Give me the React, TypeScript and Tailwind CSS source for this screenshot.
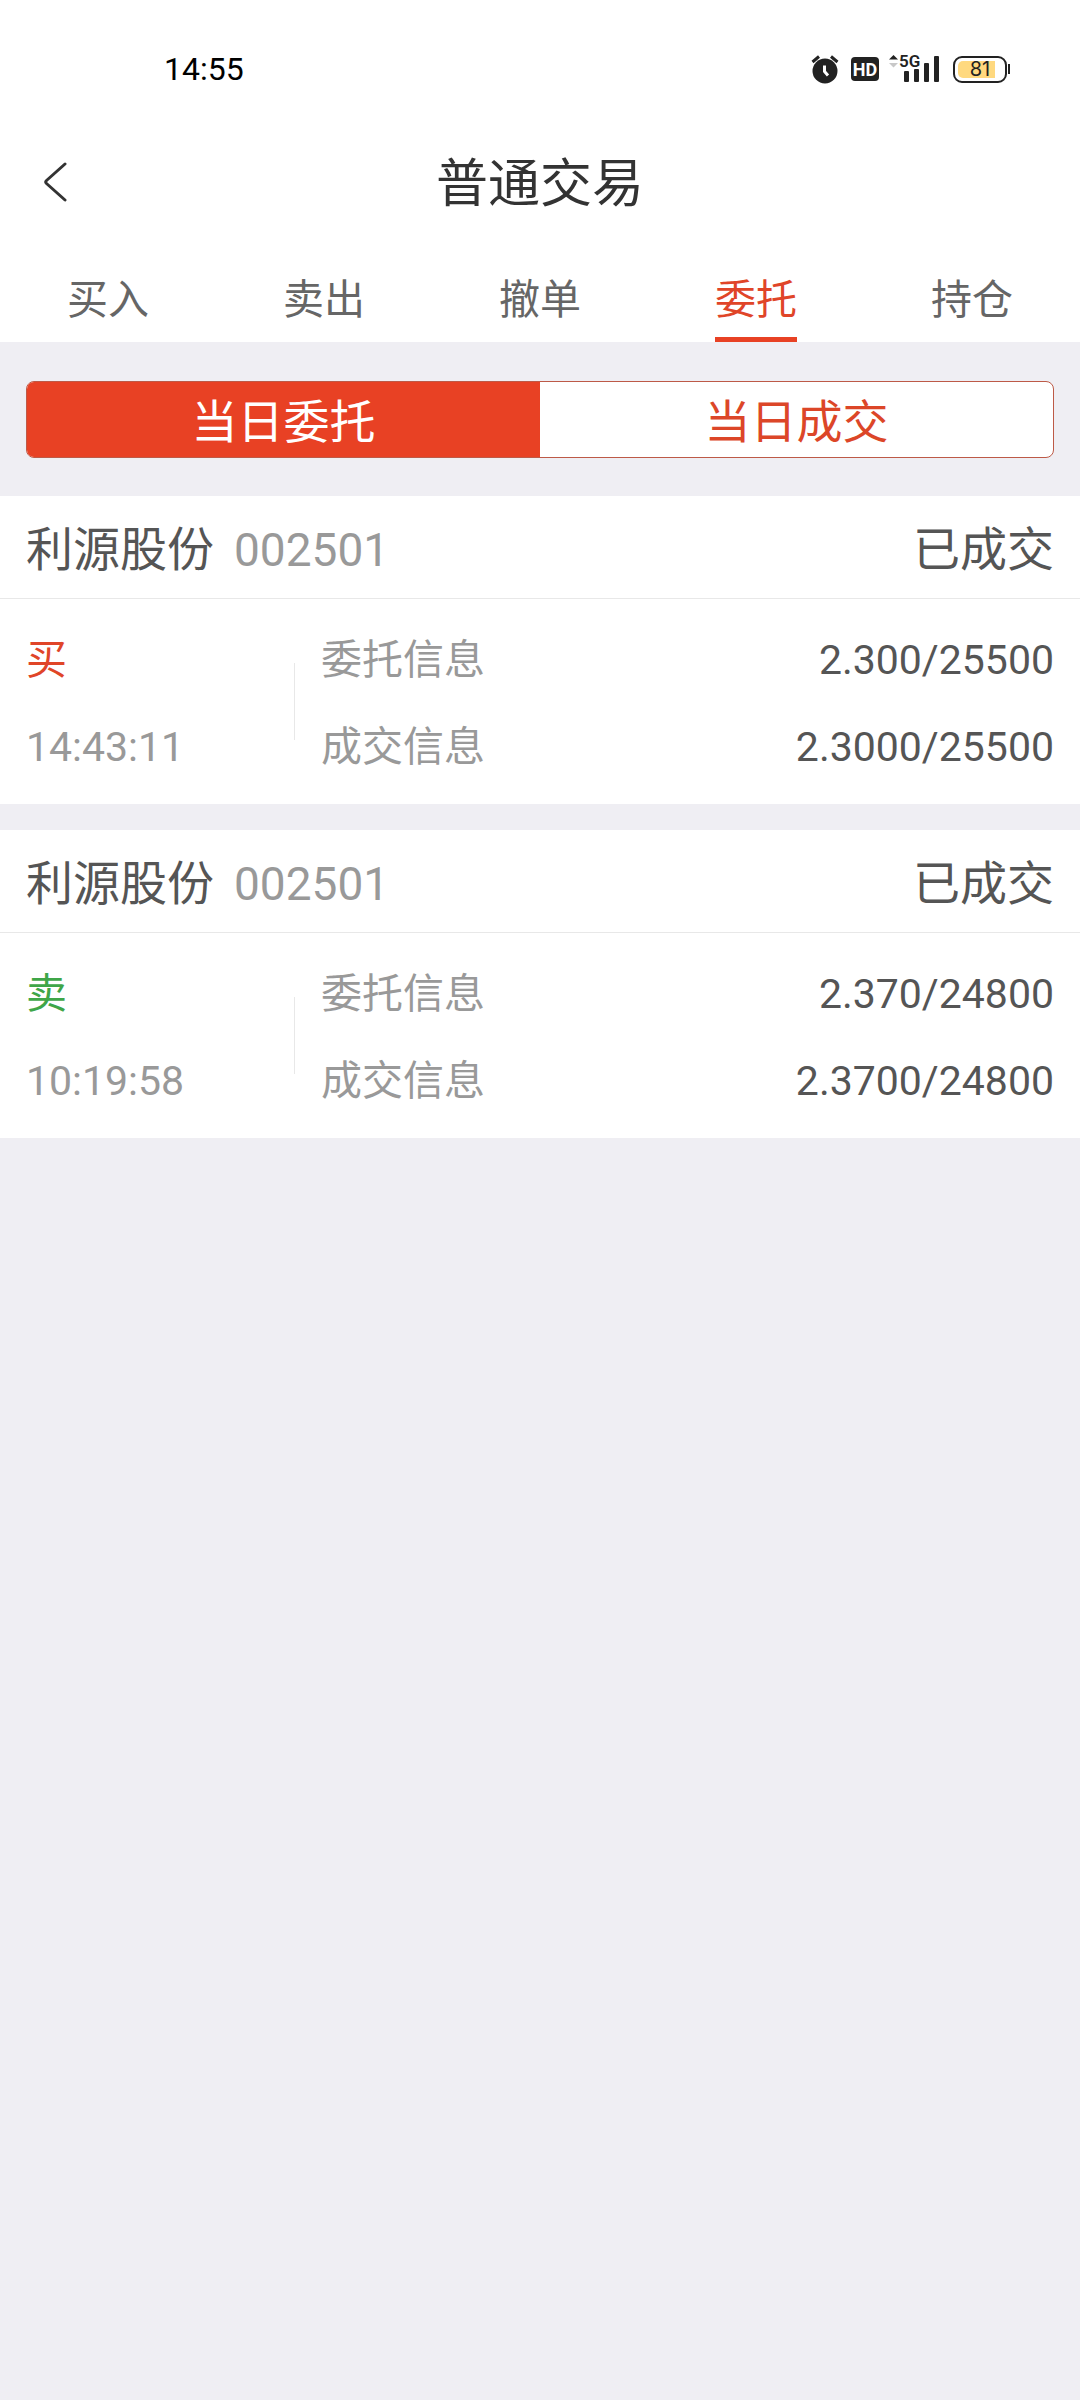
type Order = {
  name: string;
  code: string;
  status: string;
  side: "买" | "卖";
  time: string;
  placed: string;
  filled: string;
};

const tabs = ["买入", "卖出", "撤单", "委托", "持仓"];

const orders: Order[] = [
  { name: "利源股份", code: "002501", status: "已成交", side: "买", time: "14:43:11", placed: "2.300/25500", filled: "2.3000/25500" },
  { name: "利源股份", code: "002501", status: "已成交", side: "卖", time: "10:19:58", placed: "2.370/24800", filled: "2.3700/24800" },
];

function AlarmIcon() {
  return (
    <svg width="28" height="30" viewBox="0 0 28 30" aria-label="闹钟">
      <path d="M1.5 8 8 2.5M26.5 8 20 2.5" stroke="#222" strokeWidth="3" fill="none" />
      <circle cx="14" cy="17" r="12.5" fill="#222" />
      <path d="M13.5 11.5v6l3.5 4" stroke="#fff" strokeWidth="3" fill="none" />
    </svg>
  );
}

function SignalIcon() {
  return (
    <svg width="52" height="38" viewBox="0 -4 52 38" aria-label="5G 信号">
      <path d="M0 5.5 4.5 1 9 5.5z" fill="#222" />
      <path d="M0 9h9l-4.5 4.5z" fill="#c8c8c8" />
      <g fill="#222">
        <rect x="15" y="17" width="5" height="11" rx="1" />
        <rect x="25" y="15" width="5" height="13" rx="1" />
        <rect x="35" y="9" width="5" height="19" rx="1" />
        <rect x="45" y="2" width="5" height="26" rx="1" />
      </g>
      <text x="10" y="13" fontSize="17" fontWeight="600" fontFamily="Roboto, sans-serif" fill="#222">
        5G
      </text>
    </svg>
  );
}

function StatusBar() {
  return (
    <div className="flex h-[138px] items-center justify-between pr-[70px] pl-[164px]">
      <span className="text-[32px] leading-none text-black">14:55</span>
      <div className="flex items-center">
        <AlarmIcon />
        <span className="ml-3 flex h-6 w-7 items-center justify-center rounded bg-[#222] pt-px text-[18px] leading-none font-bold text-white">
          HD
        </span>
        <span className="ml-2.5">
          <SignalIcon />
        </span>
        <div className="ml-3 flex items-center gap-px">
          <div className="h-[27px] w-[54px] rounded-[9px] border-2 border-[#222] p-[3px]">
            <div className="relative h-full w-full">
              <div className="h-full w-[37px] rounded-l-[5px] bg-[#ffd97f]" />
              <span className="absolute inset-0 flex items-center justify-center font-[Inter,sans-serif] text-[20px] leading-none text-[#222]">
                81
              </span>
            </div>
          </div>
          <div className="h-2.5 w-0.5 bg-[#222]" />
        </div>
      </div>
    </div>
  );
}

function OrderCard({ order }: { order: Order }) {
  return (
    <article className="bg-white">
      <header className="flex h-[103px] items-center justify-between border-b border-[#e8e8e8] px-[26px] pt-1 text-[47px] leading-none text-[#555]">
        <h2 className="flex items-baseline gap-5">
          <span>{order.name}</span>
          <span className="text-[46px] text-[#999]">{order.code}</span>
        </h2>
        <span>{order.status}</span>
      </header>
      <div className="flex h-[205px] items-center px-[26px] text-[41px] leading-[87px] text-[#999]">
        <div className="w-[268px] pt-1">
          <div className={order.side === "买" ? "text-[#e04528]" : "text-[#3fa648]"}>{order.side}</div>
          <div>{order.time}</div>
        </div>
        <div className="h-[77px] w-px bg-[#e8e8e8]" />
        <dl className="flex-1 pt-1 pl-[26px]">
          <div className="flex justify-between">
            <dt>委托信息</dt>
            <dd className="text-[#555]">{order.placed}</dd>
          </div>
          <div className="flex justify-between">
            <dt>成交信息</dt>
            <dd className="text-[#555]">{order.filled}</dd>
          </div>
        </dl>
      </div>
    </article>
  );
}

export default function App() {
  return (
    <div className="min-h-screen bg-[#efeef3] font-[Roboto,'Noto_Sans_CJK_SC',sans-serif]">
      <div className="bg-white">
        <StatusBar />
        <header className="grid h-[90px] grid-cols-[1fr_auto_1fr] items-center">
          <button type="button" aria-label="返回" className="ml-[43px] w-6">
            <svg width="24" height="42" viewBox="0 0 24 42" fill="none" stroke="#333" strokeWidth="3" strokeLinecap="round" strokeLinejoin="round">
              <path d="M22 2 3.5 18.5q-1.5 1.5 0 3L22 38" />
            </svg>
          </button>
          <h1 className="pt-1 text-[52px] leading-none text-[#333]">普通交易</h1>
        </header>
        <nav className="grid h-[114px] grid-cols-5 justify-items-center">
          {tabs.map((tab) => (
            <button
              key={tab}
              type="button"
              aria-current={tab === "委托" ? "page" : undefined}
              className={
                tab === "委托"
                  ? "border-b-5 border-[#e84124] pt-9 text-[41px] leading-none text-[#e04528]"
                  : "border-b-5 border-transparent pt-9 text-[41px] leading-none text-[#666]"
              }
            >
              {tab}
            </button>
          ))}
        </nav>
      </div>
      <main>
        <div className="px-[26px] pt-[39px] pb-[38px]">
          <div className="grid h-[77px] grid-cols-2 overflow-hidden rounded-lg border border-[#bd5a47] bg-white text-[46px] leading-none">
            <button type="button" aria-pressed="true" className="bg-[#e84124] pt-1 text-white">
              当日委托
            </button>
            <button type="button" aria-pressed="false" className="pt-1 text-[#dc4628]">
              当日成交
            </button>
          </div>
        </div>
        <div className="flex flex-col gap-[26px]">
          {orders.map((order) => (
            <OrderCard key={order.time} order={order} />
          ))}
        </div>
      </main>
    </div>
  );
}
